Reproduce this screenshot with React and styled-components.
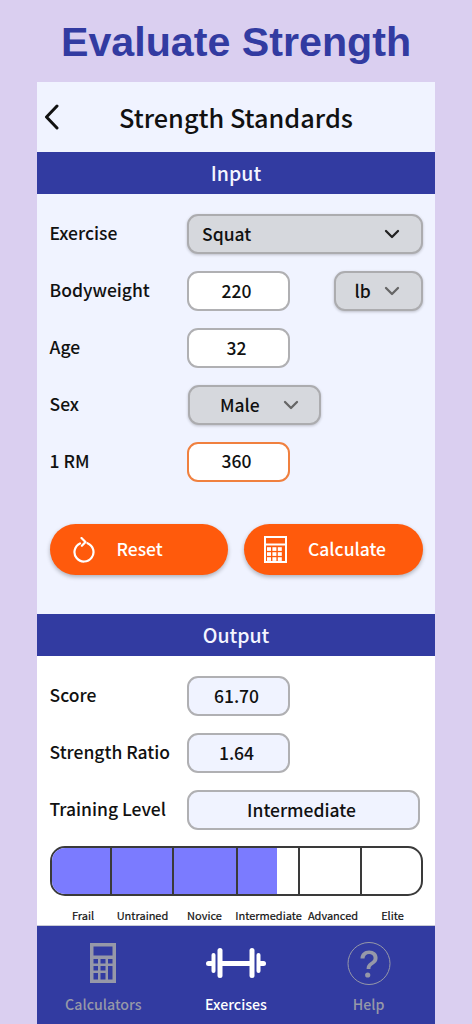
import React from 'react';
import styled, { createGlobalStyle } from 'styled-components';

const LEVELS = ['Frail', 'Untrained', 'Novice', 'Intermediate', 'Advanced', 'Elite'];
const SCORE_FILL = 61.2;

const GlobalStyle = createGlobalStyle`
  html, body {
    margin: 0;
    background: #dacff0;
  }
  * {
    box-sizing: border-box;
  }
`;

const Page = styled.div`
  width: 472px;
  height: 1024px;
  overflow: hidden;
  display: flex;
  flex-direction: column;
  align-items: center;
  background: #dacff0;
  font-family: "Noto Sans CJK JP", "Noto Sans", sans-serif;
  font-weight: 500;
  color: #111;
`;

const Headline = styled.h1`
  margin: 0;
  height: 82px;
  padding-top: 16px;
  font-family: "Liberation Sans", Arial, sans-serif;
  font-size: 41.2px;
  line-height: 52px;
  font-weight: 700;
  color: #323ba1;
  white-space: nowrap;
`;

const Card = styled.main`
  width: 398px;
  flex: 1;
  display: flex;
  flex-direction: column;
  background: #f0f3ff;
`;

const TopBar = styled.header`
  position: relative;
  height: 70px;
  display: flex;
  align-items: center;
  justify-content: center;
  font-size: 25.3px;
  padding-bottom: 1px;
`;

const BackIcon = styled.svg`
  position: absolute;
  left: 7px;
  top: 22px;
  width: 16px;
  height: 26px;
`;

const SectionBar = styled.div`
  height: 42px;
  display: flex;
  align-items: center;
  justify-content: center;
  background: #323ba1;
  color: #f4f5ff;
  font-size: 19.5px;
  padding-bottom: 2px;
`;

const InputSection = styled.section`
  height: 420px;
  padding: 20px 12.5px 0;
  display: flex;
  flex-direction: column;
  gap: 17px;
`;

const OutputSection = styled.section`
  flex: 1;
  padding: 20px 12.5px 0;
  display: flex;
  flex-direction: column;
  gap: 17px;
  background: #fff;
`;

const Row = styled.div`
  height: 40px;
  display: flex;
  align-items: center;
`;

const Label = styled.span`
  width: 137.5px;
  flex: none;
  font-size: 17.5px;
  line-height: 24px;
  margin-top: -2px;
  white-space: nowrap;
`;

const Field = styled.div`
  width: ${(p) => p.$width || 103}px;
  height: 40px;
  display: flex;
  align-items: center;
  justify-content: center;
  border: 2px solid ${(p) => (p.$focus ? '#f0803f' : '#b0b0b3')};
  border-radius: 11px;
  background: ${(p) => (p.$output ? '#f0f3ff' : '#fff')};
  font-size: 17.5px;
  padding: 0 4px ${(p) => (p.$focus ? 4 : 2)}px 0;
`;

const Select = styled.div`
  width: ${(p) => p.$width}px;
  height: 40px;
  margin-left: ${(p) => p.$offset || 0}px;
  display: flex;
  align-items: center;
  justify-content: space-between;
  padding: 0 ${(p) => p.$right || 21}px 2px ${(p) => p.$left}px;
  border: 2px solid #acacaf;
  border-radius: 11px;
  background: #d6d8dd;
  box-shadow: 0 1px 3px rgba(0, 0, 0, 0.22);
  font-size: 17.5px;
`;

const Chevron = styled.svg`
  width: 16px;
  height: 10px;
  flex: none;
  margin-top: 2px;
  stroke: ${(p) => p.$color};
`;

const Actions = styled.div`
  margin-top: 25px;
  display: flex;
  gap: 16px;
`;

const ActionButton = styled.button`
  width: 178.5px;
  height: 51px;
  border: 0;
  border-radius: 26px;
  display: flex;
  align-items: center;
  padding: 0 0 2px ${(p) => p.$pad}px;
  gap: ${(p) => p.$gap}px;
  background: #ff5a0c;
  box-shadow: 0 2px 4px rgba(0, 0, 0, 0.28);
  color: #fff;
  font-family: inherit;
  font-weight: 500;
  font-size: 17.5px;

  svg {
    flex: none;
    margin-top: 2px;
  }
`;

const Track = styled.div`
  position: relative;
  height: 50px;
  margin-top: -1px;
  display: grid;
  grid-template-columns: 60.5px 62px 63.5px 62px 62px 1fr;
  border: 2px solid #3a3a3a;
  border-radius: 15px;
  overflow: hidden;
  background: #fff;
`;

const TrackFill = styled.div`
  position: absolute;
  left: 0;
  top: 0;
  bottom: 0;
  background: #7b7bff;
`;

const TrackCell = styled.div`
  position: relative;
  border-right: 2px solid #3a3a3a;

  &:last-child {
    border-right: 0;
  }
`;

const LevelRow = styled.div`
  margin-top: -6px;
  display: grid;
  grid-template-columns: 67px 52px 72px 56px 73px 46px;
  font-size: 11px;
  font-weight: 400;
  -webkit-text-stroke: 0.2px #111;
  line-height: 16px;
  white-space: nowrap;
`;

const LevelName = styled.span`
  display: flex;
  justify-content: center;
`;

const BottomNav = styled.nav`
  height: 99px;
  display: grid;
  grid-template-columns: repeat(3, 1fr);
  background: #323ba1;
  border-top: 1px solid #c9cbd6;
`;

const NavItem = styled.div`
  display: flex;
  flex-direction: column;
  align-items: center;
  padding-top: 16px;
  color: ${(p) => (p.$active ? '#fff' : '#9698a8')};
  font-size: 14.2px;
  line-height: 22px;
`;

const NavIcon = styled.svg`
  width: 60px;
  height: 44px;
  margin-bottom: 7px;
  flex: none;
`;

function ChevronDown({ color = '#222' }) {
  return (
    <Chevron $color={color} viewBox="0 0 16 10" fill="none" strokeWidth="2.3" strokeLinecap="round" strokeLinejoin="round">
      <path d="M2 2l6 6 6-6" />
    </Chevron>
  );
}

function CalculatorIcon({ color = '#fff' }) {
  const keys = [];
  for (let row = 0; row < 3; row++) {
    for (let col = 0; col < 3; col++) {
      keys.push(<rect key={`${row}-${col}`} x={3 + col * 5.4} y={11.2 + row * 5} width="4" height="3.7" fill={color} />);
    }
  }
  return (
    <g>
      <rect x="1" y="1" width="21" height="25" fill="none" stroke={color} strokeWidth="2" />
      <line x1="1" y1="8.5" x2="22" y2="8.5" stroke={color} strokeWidth="2" />
      {keys}
    </g>
  );
}

export default function App() {
  return (
    <Page>
      <GlobalStyle />
      <Headline>Evaluate Strength</Headline>
      <Card>
        <TopBar>
          <BackIcon viewBox="0 0 16 26" fill="none" stroke="#111" strokeWidth="3" strokeLinecap="round" strokeLinejoin="round">
            <path d="M13 2L2.5 13 13 24" />
          </BackIcon>
          Strength Standards
        </TopBar>
        <SectionBar>Input</SectionBar>
        <InputSection>
          <Row>
            <Label>Exercise</Label>
            <Select $width={235.5} $left={13}>
              Squat
              <ChevronDown />
            </Select>
          </Row>
          <Row>
            <Label>Bodyweight</Label>
            <Field>220</Field>
            <Select $width={89} $offset={43.500} $left={19} $right={21}>
              lb
              <ChevronDown color="#666" />
            </Select>
          </Row>
          <Row>
            <Label>Age</Label>
            <Field>32</Field>
          </Row>
          <Row>
            <Label>Sex</Label>
            <Select $width={133} $offset={1} $left={30} $right={20}>
              Male
              <ChevronDown color="#666" />
            </Select>
          </Row>
          <Row>
            <Label>1 RM</Label>
            <Field $focus>360</Field>
          </Row>
          <Actions>
            <ActionButton $pad={23} $gap={22}>
              <svg width="22" height="26" viewBox="0 0 22 26" fill="none" stroke="#fff" strokeWidth="2.2" strokeLinecap="round" strokeLinejoin="round">
                <path d="M7 6.400A9.500 9.500 0 1 0 14.500 6.200" />
                <path d="M8.500 1l4 4-3.600 3.800" />
              </svg>
              Reset
            </ActionButton>
            <ActionButton $pad={20} $gap={21}>
              <svg width="23" height="27" viewBox="0 0 23 27">
                <CalculatorIcon />
              </svg>
              Calculate
            </ActionButton>
          </Actions>
        </InputSection>
        <SectionBar>Output</SectionBar>
        <OutputSection>
          <Row>
            <Label>Score</Label>
            <Field $output>61.70</Field>
          </Row>
          <Row>
            <Label>Strength Ratio</Label>
            <Field $output>1.64</Field>
          </Row>
          <Row>
            <Label>Training Level</Label>
            <Field $output $width={233}>Intermediate</Field>
          </Row>
          <Track>
            <TrackFill style={{ width: `${SCORE_FILL}%` }} />
            {LEVELS.map((level) => (
              <TrackCell key={level} />
            ))}
          </Track>
          <LevelRow>
            {LEVELS.map((level) => (
              <LevelName key={level}>{level}</LevelName>
            ))}
          </LevelRow>
        </OutputSection>
        <BottomNav>
          <NavItem>
            <NavIcon viewBox="0 0 60 44">
              <g fill="#9698a8">
                <path fillRule="evenodd" d="M17 1h26v40H17zM20.500 4.500v9h19v-9zM20.500 17v4.500h4.500V17zM27.500 17v4.500h5V17zM35 17v4.500h4.500V17zM20.500 24v4.500h4.500V24zM27.500 24v4.500h5V24zM35 24v13.500h4.500V24zM20.500 31v6.500h4.500V31zM27.500 31v6.500h5V31z" />
              </g>
            </NavIcon>
            Calculators
          </NavItem>
          <NavItem $active>
            <NavIcon viewBox="0 0 60 44" fill="#fff">
              <rect x="0" y="19" width="8" height="5" rx="2.500" />
              <rect x="5.500" y="11" width="4" height="20" rx="2" />
              <rect x="11.500" y="6" width="5" height="30" rx="2.500" />
              <rect x="16" y="19" width="28" height="5" />
              <rect x="43.500" y="6" width="5" height="30" rx="2.500" />
              <rect x="50.500" y="11" width="4" height="20" rx="2" />
              <rect x="52" y="19" width="8" height="5" rx="2.500" />
            </NavIcon>
            Exercises
          </NavItem>
          <NavItem>
            <NavIcon viewBox="0 0 60 44">
              <circle cx="30" cy="21.500" r="21" fill="none" stroke="#9698a8" strokeWidth="1" />
              <path d="M21.500 16.500c0-5 3.700-8 8.600-8s8.500 2.800 8.500 7.400c0 3.300-1.900 5-4.200 6.500-2.200 1.400-3 2.300-3 4.600h-3.800c0-3.400 1.100-5 3.500-6.600 2-1.300 3.500-2.300 3.500-4.400 0-2.400-2-4-4.500-4-2.700 0-4.500 1.800-4.600 4.500z" fill="#9698a8" />
              <circle cx="28.700" cy="33" r="2.600" fill="#9698a8" />
            </NavIcon>
            Help
          </NavItem>
        </BottomNav>
      </Card>
    </Page>
  );
}
